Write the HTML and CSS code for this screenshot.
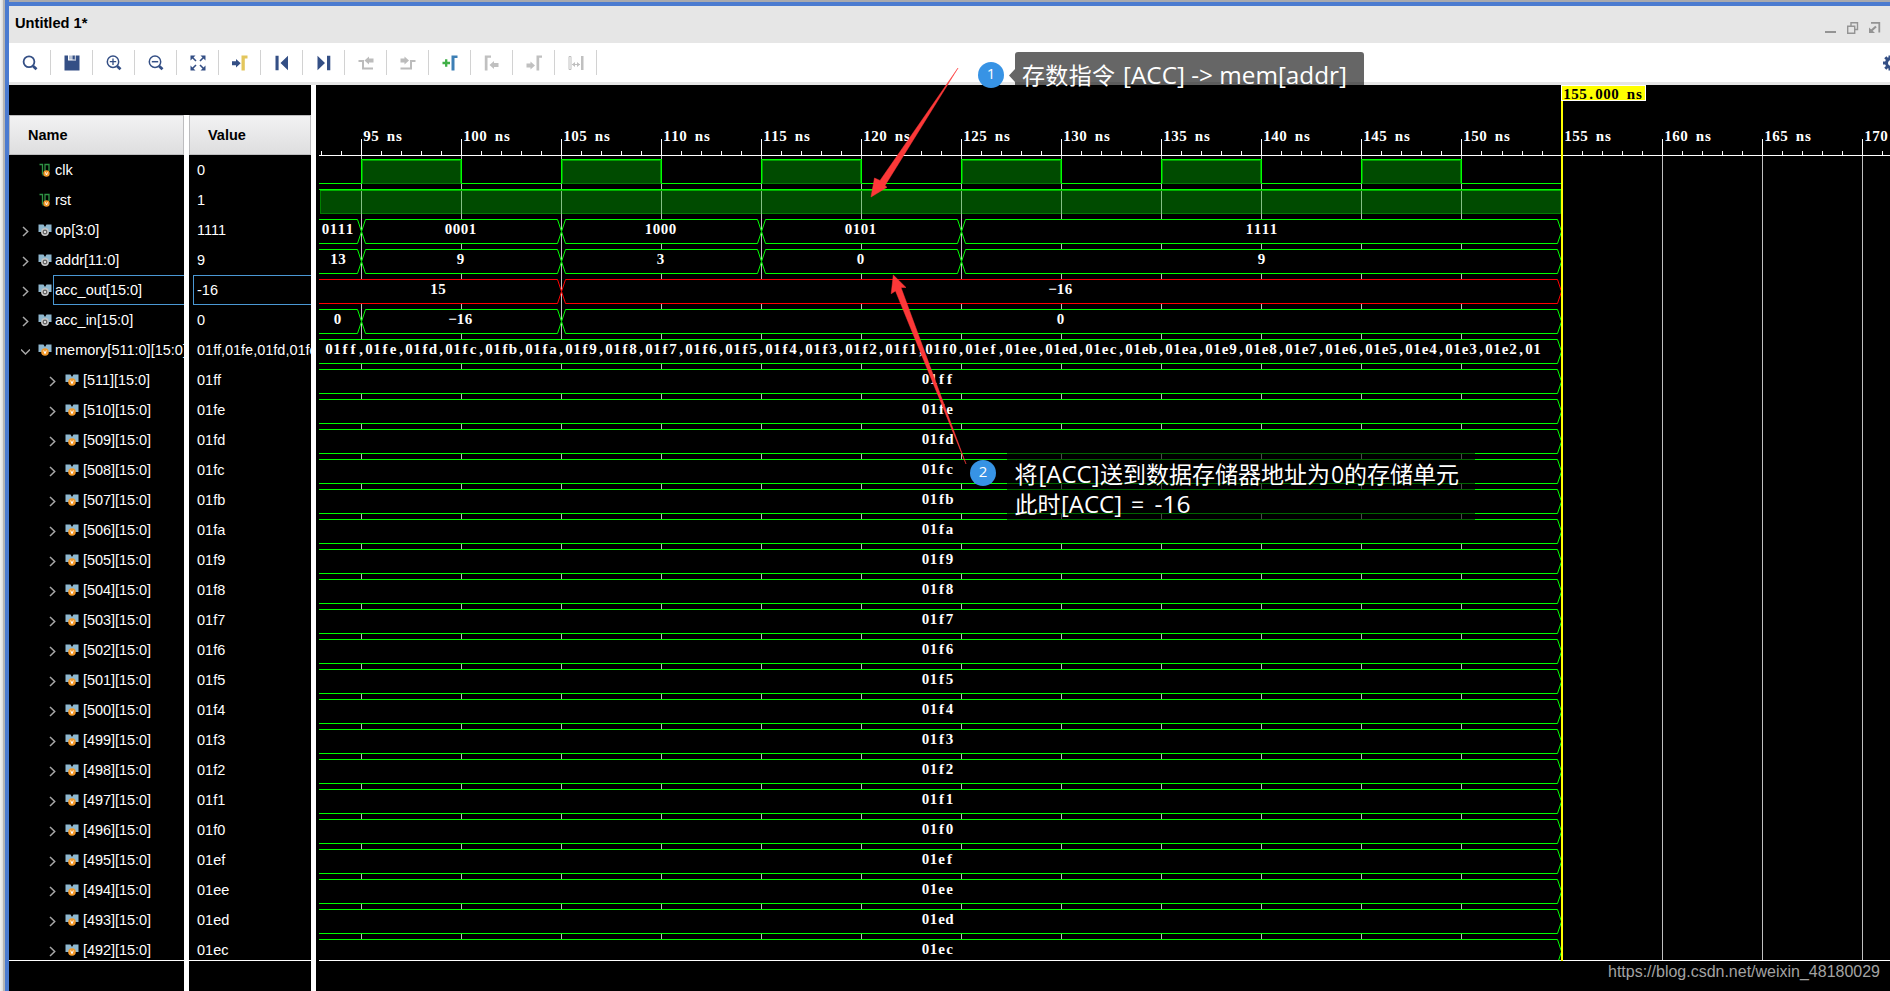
FILE: index.html
```html
<!DOCTYPE html>
<html lang="zh">
<head>
<meta charset="utf-8">
<title>Untitled 1*</title>
<link rel="stylesheet" href="styles.css">
</head>
<body>
<div class="window">
  <header class="titlebar">
    <span class="title">Untitled 1*</span>
    <svg class="winbtns" width="56" height="12" viewBox="0 0 56 12" fill="none" stroke="#949494" stroke-width="1.4">
      <path d="M0 10H11" stroke-width="2"/>
      <path d="M22.700 4.200H29.700V11.200H22.700ZM26 4V.8H32.500V7.500H30"/>
      <path d="M46 .9H54.300V10.500" stroke-width="1.800"/><path d="M51 4.500L46.500 8.500" stroke-width="2.200"/><path d="M44 5.500V11H50Z" fill="#949494" stroke="none"/>
    </svg>
  </header>
  <nav class="toolbar">
    <span class="tool"><svg viewBox="0 0 16 16"><circle cx="7" cy="6.700" r="5.400" fill="none" stroke="#344f85" stroke-width="1.800"/><path d="M11 11L14.500 14.300" stroke="#344f85" stroke-width="2.800"/></svg></span>
    <span class="tool"><svg viewBox="0 0 16 16"><path fill="#344f85" d="M.5 .5H4V5.500H12V.5H15.500V15.500H.5Z"/><path fill="#344f85" d="M5 .5H8.500V4.500H5ZM10.500 .5H12V5H10.500Z" opacity=".35"/><path fill="#344f85" d="M8.500 .5H10.800V4.500H8.500Z"/></svg></span>
    <span class="tool"><svg viewBox="0 0 16 16"><circle cx="7" cy="6.700" r="5.700" fill="none" stroke="#344f85" stroke-width="1.500"/><path d="M11 11L14.500 14.300" stroke="#344f85" stroke-width="2.800"/><path d="M3.800 6.700H10.200M7 3.500V9.900" stroke="#344f85" stroke-width="1.300"/></svg></span>
    <span class="tool"><svg viewBox="0 0 16 16"><circle cx="7" cy="6.700" r="5.700" fill="none" stroke="#344f85" stroke-width="1.500"/><path d="M11 11L14.500 14.300" stroke="#344f85" stroke-width="2.800"/><path d="M3.800 6.700H10.200" stroke="#344f85" stroke-width="1.500"/></svg></span>
    <span class="tool"><svg viewBox="0 0 16 16"><path fill="#344f85" d="M.5 .5H5.500L.5 5.500ZM15.500 .5V5.500L10.500 .5ZM.5 15.500V10.500L5.500 15.500ZM15.500 15.500H10.500L15.500 10.500Z"/><path d="M2 2L6 6M14 2L10 6M2 14L6 10M14 14L10 10" stroke="#344f85" stroke-width="1.600"/></svg></span>
    <span class="tool"><svg viewBox="0 0 16 16"><path fill="#344f85" d="M0 6.300H4V4L8.700 8.300L4 12.500V10.300H0Z"/><path fill="#e3c65c" d="M9.500 .5H15.500V3.500H12.800V15.500H9.500Z"/></svg></span>
    <span class="tool"><svg viewBox="0 0 16 16"><path fill="#344f85" d="M1.500 .8H4.600V15.200H1.500ZM14 .8V15.200L6.500 8Z"/></svg></span>
    <span class="tool"><svg viewBox="0 0 16 16"><path fill="#344f85" d="M11 .8H14.300V15.200H11ZM1.500 .8V15.200L9 8Z"/></svg></span>
    <span class="tool"><svg viewBox="0 0 16 16"><path fill="none" stroke="#bcbcbc" stroke-width="2" d="M.5 6H5V13.500H15"/><path fill="#bcbcbc" d="M6.500 5.500L11 1.500V3.500H15.500V7.500H11V9.500Z"/></svg></span>
    <span class="tool"><svg viewBox="0 0 16 16"><path fill="none" stroke="#bcbcbc" stroke-width="2" d="M.5 13.500H11V6H15.500"/><path fill="#bcbcbc" d="M9 5.500L4.500 1.500V3.500H.5V7.500H4.500V9.500Z"/></svg></span>
    <span class="tool"><svg viewBox="0 0 16 16"><path stroke="#3faf46" stroke-width="2.300" d="M.5 8H8M4.200 4.200V11.800"/><path fill="#3d7fb5" d="M9.500 .5H15.500V3H12.500V15.500H9.500Z"/></svg></span>
    <span class="tool"><svg viewBox="0 0 16 16"><path fill="#c0c0c0" d="M.8 .5H7V2.800H3.500V15.500H.8ZM5.500 10L10 6V8H14.500V12H10V14Z"/></svg></span>
    <span class="tool"><svg viewBox="0 0 16 16"><path fill="#c0c0c0" d="M10.500 .5H16V2.800H13.200V15.500H10.500ZM9 10.500L4.500 6.500V8.500H.5V12.500H4.500V14.500Z"/></svg></span>
    <span class="tool"><svg viewBox="0 0 16 16"><path fill="none" stroke="#c0c0c0" d="M1 1.500H3V14.500H1ZM4 9.500H12"/><path fill="#c0c0c0" d="M13 1H15.500V15H13ZM4 9.500L7 7V12ZM12 9.500L9 7V12Z"/></svg></span>
    <svg class="gear" width="7" height="16" viewBox="0 0 7 16"><circle cx="8" cy="8" r="4.500" fill="none" stroke="#344f85" stroke-width="3"/><path d="M0 8H3M2.300 2.300L4.500 4.500M2.300 13.700L4.500 11.500M7 .5V4M7 12V15.500" stroke="#344f85" stroke-width="3"/></svg>
  </nav>
  <main class="panes">
    <section class="signals">
      <div class="cols">
        <div class="col names"><div class="head">Name</div><div class="rows" id="names"></div></div>
        <div class="col values"><div class="head">Value</div><div class="rows" id="values"></div></div>
      </div>
    </section>
    <section class="wave"><svg id="wave" width="1574" height="906" viewBox="316 85 1574 906"></svg></section>
  </main>
</div>
<svg class="notes" width="1890" height="991" viewBox="0 0 1890 991">
  <path class="bubble" d="M1015 85V55Q1015 52 1018 52H1361Q1364 52 1364 55V85ZM1015 69V82L1009 75.500Z"/>
  <path class="arrow" d="M871 197L874.500 178L880 180.500L958 68L885 185.500L887 187.300Z"/>
  <path class="arrow" d="M893.300 275L891.200 293.700L895.500 291L966 464L901 287.500L906 287.500Z"/>
  <rect class="bubble" x="1007" y="452" width="468" height="68"/>
  <circle class="dot" cx="991" cy="75" r="13"/><circle class="dot" cx="983" cy="473" r="13"/>
  <text class="num" x="991" y="79">1</text><text class="num" x="983" y="477">2</text>
  <text class="note" y="84"><tspan x="1022" textLength="93">存数指令</tspan> <tspan x="1123" textLength="224" lengthAdjust="spacingAndGlyphs">[ACC] -&gt; mem[addr]</tspan></text>
  <text class="note" y="483"><tspan x="1014.500">将</tspan><tspan x="1038.500" textLength="61" lengthAdjust="spacingAndGlyphs">[ACC]</tspan><tspan x="1100" textLength="230">送到数据存储器地址为</tspan><tspan x="1331">0</tspan><tspan x="1344" textLength="115">的存储单元</tspan></text>
  <text class="note" y="513"><tspan x="1014.500" textLength="46">此时</tspan><tspan x="1061" textLength="61" lengthAdjust="spacingAndGlyphs">[ACC]</tspan><tspan x="1131">=</tspan><tspan x="1154.500" textLength="36" lengthAdjust="spacingAndGlyphs">-16</tspan></text>
  <text class="mark" x="1608" y="977" textLength="272" lengthAdjust="spacingAndGlyphs">https://blog.csdn.net/weixin_48180029</text>
</svg>
<script src="app.js"></script>
</body>
</html>
```
FILE: styles.css
```css
* { box-sizing: border-box; }
body {
  margin: 0; width: 1890px; height: 991px; overflow: hidden; position: relative;
  font: 14.5px "Liberation Sans", Arial, sans-serif; color: #000;
  background: linear-gradient(90deg, #f2f2f2 0, #dcdcdc 3px, #b4b4b4 3px, #b4b4b4 5px, #fff 5px);
}
.window {
  margin-left: 5px; height: 991px; border-left: 4px solid #4b7bd0;
  display: flex; flex-direction: column; background: #e6e6e6;
}
.titlebar {
  height: 43px; flex: none; border-top: 2px solid #a9a9ad;
  display: flex; align-items: center; justify-content: space-between;
  padding: 4px 9px 0 6px; box-shadow: inset 0 4px 0 #4b7bd0;
}
.title { font-weight: bold; font-size: 14.67px; padding-bottom: 3px; }
.winbtns { display: block; align-self: flex-start; margin-top: 16px; }
.toolbar { height: 39px; flex: none; background: #fff; display: flex; align-items: center; }
.tool {
  width: 42px; height: 25px; border-right: 1px solid #d2d2d2;
  display: flex; align-items: center; justify-content: center;
}
.tool svg { width: 16px; height: 16px; display: block; }
.gear { margin-left: auto; }
.panes { margin-top: 3px; flex: 1; display: flex; background: #fff; min-height: 0; }
.signals { width: 302px; background: #000; padding-top: 30px; }
.cols { display: flex; gap: 5px; background: #fff; height: 100%; }
.col { background: #000; color: #fff; display: flex; flex-direction: column; overflow: hidden; }
.names { width: 175px; }
.values { width: 122px; }
.head {
  height: 40px; flex: none; color: #000; font-weight: bold; line-height: 38px; padding-left: 18px;
  border: 1px solid #bdbdbf; background: linear-gradient(#f2f2f3, #dededf);
}
.rows { height: 806px; overflow: hidden; border-bottom: 1px solid #fff; flex: none; }
.row { height: 30px; display: flex; align-items: center; white-space: nowrap; }
.names .row { padding-left: 12px; }
.names .child { padding-left: 39px; }
.chev { width: 9px; height: 11px; flex: none; margin-top: 2px; margin-right: 8px; }
.sig { width: 14px; height: 14px; flex: none; margin-right: 1px; }
.label { height: 30px; line-height: 31px; padding-left: 2px; flex: none; }
.child .label { padding-left: 3px; letter-spacing: -.05px; }
.values .label { margin-left: 4px; padding-left: 4px; width: 124px; }
.selected .label { box-shadow: inset 1px 1px 0 #4a98d4, inset 0 -1px 0 #4a98d4; width: 140px; }
.wave { margin-left: 5px; width: 1574px; background: #000; }
.wave svg { display: block; }
.mono { font: bold 15px "Liberation Serif", "Times New Roman", serif; fill: #fff; text-anchor: middle; }
.mono.dark { fill: #000; }
.bus { fill: #000; stroke: #0f0; }
.bus.alert { stroke: #f00; }
.notes { position: absolute; left: 0; top: 0; }
.bubble { fill: rgba(0, 0, 0, .6); }
.arrow { fill: #fc3838; stroke: #fc3838; stroke-width: .5; }
.dot { fill: #3793e5; }
.num { font: 15px "Open Sans", sans-serif; fill: #fff; text-anchor: middle; }
.note { font: 23px "Open Sans", "Noto Sans CJK SC", sans-serif; fill: #fff; }
.mark { font: 16px "Liberation Sans", Arial, sans-serif; fill: #a3a3a3; }
```
FILE: app.js
```js
const signals = [
  { name: 'clk', value: '0', kind: 'bit' },
  { name: 'rst', value: '1', kind: 'bit' },
  { name: 'op[3:0]', value: '1111', kind: 'gray', wave: [[301, '0111', 337.5], [361, '0001'], [561, '1000'], [761, '0101'], [961, '1111', 1261.5]] },
  { name: 'addr[11:0]', value: '9', kind: 'gray', wave: [[301, '13', 338], [361, '9'], [561, '3'], [761, '0'], [961, '9', 1261.5]] },
  { name: 'acc_out[15:0]', value: '-16', kind: 'gray', alert: true, wave: [[301, '15', 438], [561, '−16', 1060.5]] },
  { name: 'acc_in[15:0]', value: '0', kind: 'gray', wave: [[301, '0', 337.5], [361, '−16'], [561, '0', 1060.5]] },
];
const hex = n => n.toString(16).padStart(4, '0');
const words = [];
for (let n = 511; n > 480; n--) words.push(hex(n));
signals.push({ name: 'memory[511:0][15:0]', value: '01ff,01fe,01fd,01fc', kind: 'orange', open: true, wave: [[301, words.slice(0, 30).join(',') + ',01', 933]] });
for (let n = 511; n >= 492; n--) signals.push({ name: `[${n}][15:0]`, value: hex(n), kind: 'orange', child: true, wave: [[301, hex(n), 937.5]] });

// Signal list
const icons = {
  bit: '<path d="M1.500 1.500H4.500V11.500M7 10V1.500H11V8" fill="none" stroke="#2f9444" stroke-width="1.300"/><path d="M4.500 12H7" stroke="#2f9444"/><circle cx="8.500" cy="10.500" r="3.200" fill="#f39a2b"/><path d="M7.400 9.300L8.500 12L9.600 9.300" fill="none" stroke="#fff" stroke-width=".9"/>',
  gray: '<path d="M.5 1.500H5.500L7 4L8.500 1.500H13.500V9H.5Z" fill="#8fb8cf"/><circle cx="7" cy="9" r="3.200" fill="#666" stroke="#c4c4c4" stroke-width="1.500"/><circle cx="7" cy="9" r="1" fill="#fff"/>',
  orange: '<path d="M.5 1.500H5.500L7 4L8.500 1.500H13.500V9H.5Z" fill="#8fb8cf"/><circle cx="7" cy="9" r="3.800" fill="#f39a2b"/><path d="M5.700 7.500L7 10.700L8.300 7.500" fill="none" stroke="#fff"/>',
};
let names = '', values = '';
signals.forEach((s, i) => {
  const cls = 'row' + (s.child ? ' child' : '') + (s.alert ? ' selected' : '');
  const d = s.kind === 'bit' ? '' : s.open ? 'M0 3L4.500 7.500L9 3' : 'M2 .5L6.700 5L2 9.500';
  names += `<div class="${cls}"><svg class="chev" viewBox="0 0 9 10"><path d="${d}" fill="none" stroke="#a8a8a8" stroke-width="1.500"/></svg><svg class="sig" viewBox="0 0 14 14">${icons[s.kind]}</svg><span class="label">${s.name}</span></div>`;
  values += `<div class="row${s.alert ? ' selected' : ''}"><span class="label">${s.value}</span></div>`;
});
document.getElementById('names').innerHTML = names;
document.getElementById('values').innerHTML = values;

// Waveform
const rect = (x, y, w, h, fill) => `<rect x="${x}" y="${y}" width="${w}" height="${h}" fill="${fill}"/>`;
// Fixed 8px character cells, the first one starting at x
const mono = (str, x, y, cls = '') => `<text class="mono ${cls}" y="${y}" x="${[...str].map((c, i) => x + 4 + i * 8).join(' ')}">${str}</text>`;
const END = 1561;
let g = '';
for (let x = 361; x < 1890; x += 100) g += rect(x < END ? x : x + 1, 156, 1, 804, '#c0c0c0');

for (let x = 361; x < END; x += 200) {
  g += rect(x, 159, 101, 25, '#00ff00') + rect(x + 1, 160, 99, 24, '#00a000') + rect(x + 2, 161, 97, 22, '#004b00') + rect(x + 1, 183, 99, 1, '#008000');
}
g += rect(319, 183, 42, 1, '#00ff00');
for (let x = 461; x < END; x += 200) g += rect(x, 183, 100, 1, '#00ff00');
g += rect(320, 190, 1241, 24, '#008000') + rect(321, 191, 1239, 22, '#004b00') + rect(320, 190, 1241, 1, '#00b000') + rect(319, 189, 1242, 1, '#00ff00');
for (let x = 361; x < END; x += 100) g += rect(x, 191, 1, 23, '#84c084');

signals.forEach((s, i) => {
  if (!s.wave) return;
  const top = 159.5 + i * 30, bot = top + 24, mid = top + 12;
  s.wave.forEach(([x0, label, at], k) => {
    const x1 = k + 1 < s.wave.length ? s.wave[k + 1][0] : END;
    const L = x0 + .5, R = x1 + .5;
    const left = k ? `M${L} ${mid}L${L + 4} ${top}` : `M319 ${top}`;
    const leftEnd = k ? `L${L + 4} ${bot}L${L} ${mid}` : `L319 ${bot}`;
    g += `<path class="bus${s.alert ? ' alert' : ''}" d="${left}L${R - 4} ${top}L${R} ${mid}L${R - 4} ${bot}${leftEnd}"/>`;
    const c = at || (x0 + x1) / 2 - .5;
    g += mono(label, c - label.length * 4, 155 + i * 30 + 19);
  });
});
g += rect(316, 960, 1574, 31, '#000') + rect(319, 960, 1571, 1, '#fff');

// Time ruler
g += rect(319, 155, 1571, 1, '#fff');
for (let k = 0; k * 20 + 321 < 1890; k++) {
  const x = 321 + k * 20, major = k % 5 === 2, o = x > 1500 ? 1 : 0;
  g += rect(x + o, major ? 139 : 151, 1, major ? 16 : 4, '#fff');
  if (major) g += mono(`${95 + (k - 2)} ns`, x + o + 2, 141);
}
g += rect(1561, 85, 2, 876, '#ff0') + rect(1561, 85, 85, 16, '#fff') + rect(1562, 86, 83, 14, '#ff0') + mono('155.000 ns', 1563, 99, 'dark');
document.getElementById('wave').innerHTML = g;
```
